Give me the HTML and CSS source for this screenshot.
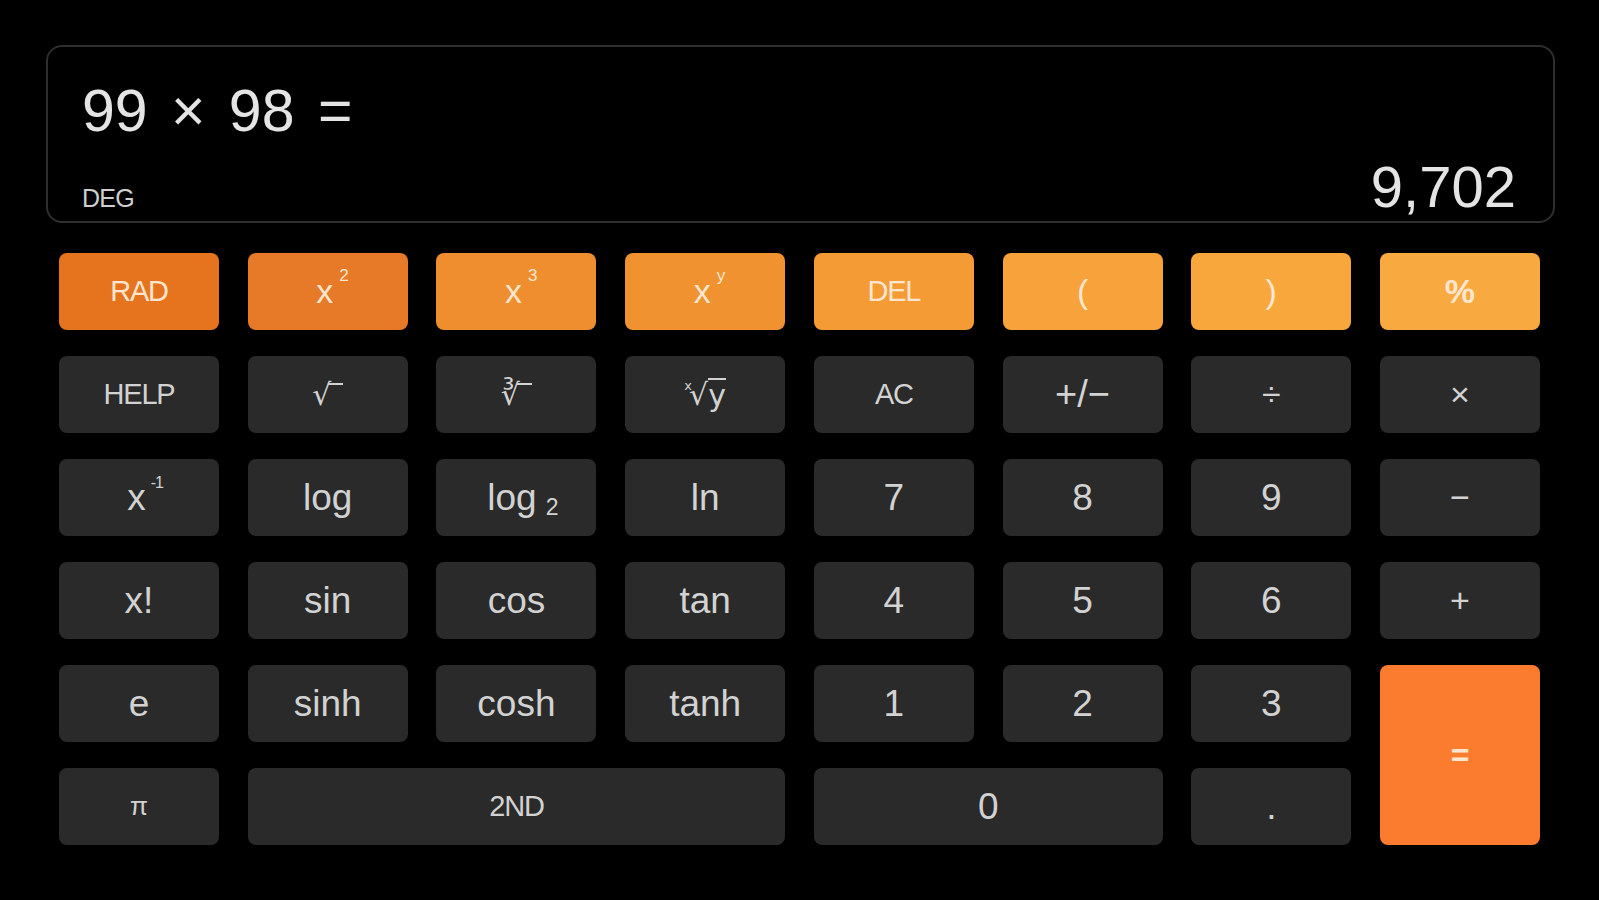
FILE: index.html
```html
<!DOCTYPE html>
<html lang="en">

<head>
    <meta charset="UTF-8">
    <meta name="viewport" content="width=device-width, initial-scale=1.0">
    <title>Scientific Calculator</title>
    <link rel="stylesheet" href="styles.css">
</head>

<body>
    <div class="calc">
        <div class="screen">
            <p class="expr">99 × 98 =</p>
            <div class="bottom">
                <span class="mode">DEG</span>
                <span class="result">9,702</span>
            </div>
        </div>
        <div class="keys">
            <button class="key top c1 caps">RAD</button>
            <button class="key top c2"><span class="lbl">x<span class="sup">2</span></span></button>
            <button class="key top c3"><span class="lbl">x<span class="sup">3</span></span></button>
            <button class="key top c4"><span class="lbl">x<span class="sup">y</span></span></button>
            <button class="key top c5 caps">DEL</button>
            <button class="key top c6">(</button>
            <button class="key top c7">)</button>
            <button class="key top c8 pct">%</button>

            <button class="key caps">HELP</button>
            <button class="key root">√<span class="bar"></span></button>
            <button class="key root">∛<span class="bar"></span></button>
            <button class="key root"><span class="idx">x</span>√<span class="rad">y</span></button>
            <button class="key caps">AC</button>
            <button class="key op">+/−</button>
            <button class="key op small">÷</button>
            <button class="key op small">×</button>

            <button class="key fn"><span class="lbl">x<span class="sup">-1</span></span></button>
            <button class="key fn">log</button>
            <button class="key fn"><span class="lbl">log<span class="sub">2</span></span></button>
            <button class="key fn">ln</button>
            <button class="key fn">7</button>
            <button class="key fn">8</button>
            <button class="key fn">9</button>
            <button class="key op small">−</button>

            <button class="key fn">x!</button>
            <button class="key fn">sin</button>
            <button class="key fn">cos</button>
            <button class="key fn">tan</button>
            <button class="key fn">4</button>
            <button class="key fn">5</button>
            <button class="key fn">6</button>
            <button class="key op small">+</button>

            <button class="key fn">e</button>
            <button class="key fn">sinh</button>
            <button class="key fn">cosh</button>
            <button class="key fn">tanh</button>
            <button class="key fn">1</button>
            <button class="key fn">2</button>
            <button class="key fn">3</button>
            <button class="key equals">=</button>

            <button class="key tiny">π</button>
            <button class="key caps second">2ND</button>
            <button class="key fn zero">0</button>
            <button class="key fn">.</button>
        </div>
    </div>
</body>

</html>
```

FILE: styles.css
```css
* {
    margin: 0;
    padding: 0;
    box-sizing: border-box;
}

body {
    background: #000;
    font-family: "Liberation Sans", Arial, sans-serif;
    color: #e4e4e4;
}

.calc {
    width: 1599px;
    height: 900px;
    padding: 45px 44px 0 46px;
}

.screen {
    height: 178px;
    border: 2px solid #2e2e2e;
    border-radius: 16px;
    padding: 35px 37px 5px 34px;
    display: flex;
    flex-direction: column;
}

.expr {
    font-size: 59px;
    line-height: 1;
    word-spacing: 7px;
}

.bottom {
    margin-top: auto;
    display: flex;
    justify-content: space-between;
    align-items: baseline;
}

.mode {
    font-size: 25px;
    letter-spacing: -0.8px;
    color: #cfcfcf;
}

.result {
    font-size: 58px;
    line-height: 1;
}

.keys {
    margin: 30px 15px 0 13px;
    display: grid;
    grid-template-columns: repeat(8, 1fr);
    grid-template-rows: repeat(6, 77px);
    gap: 26px 28.7px;
}

.key {
    border: none;
    border-radius: 8px;
    background: #2a2a2a;
    color: #d2d2d2;
    font-family: "Liberation Sans", Arial, sans-serif;
    font-size: 37px;
    display: flex;
    justify-content: center;
    align-items: center;
}

.caps {
    font-size: 29px;
    letter-spacing: -1.2px;
}

.top {
    color: #fde6cf;
    font-size: 34px;
}

.top.caps {
    font-size: 29px;
}

.c1 { background: #e6741f; }
.c2 { background: #e67a29; }
.c3 { background: #ef8e2e; }
.c4 { background: #f09230; }
.c5 { background: #f59b35; }
.c6 { background: #f7a23a; }
.c7 { background: #f8a73d; }
.c8 { background: #f8aa40; }

.pct {
    font-weight: bold;
    font-size: 34px;
}

.lbl {
    white-space: nowrap;
}

.sup {
    display: inline-block;
    width: 0;
    font-size: 17px;
    line-height: 0;
    vertical-align: 22px;
    margin-left: 6px;
}

.fn .sup {
    font-size: 16px;
    margin-left: 5px;
    letter-spacing: -1px;
}

.sub {
    display: inline-block;
    width: 0;
    font-size: 23px;
    line-height: 0;
    vertical-align: -5px;
    margin-left: 9px;
}

.root {
    font-size: 30px;
    font-family: "DejaVu Sans", sans-serif;
}

.bar {
    display: inline-block;
    width: 15px;
    border-top: 2px solid #d2d2d2;
    align-self: center;
    margin-bottom: 22px;
    margin-left: -3px;
}

.idx {
    font-size: 13px;
    align-self: center;
    margin-bottom: 18px;
    margin-right: -3px;
}

.rad {
    border-top: 2px solid #d2d2d2;
    line-height: 1;
    font-size: 30px;
    padding-top: 1px;
}

.op {
    font-size: 38px;
}

.small {
    font-size: 34px;
}

.tiny {
    font-size: 26px;
}

.equals {
    grid-column: 8;
    grid-row: 5 / span 2;
    background: #fb7b2f;
    color: #fde6cf;
    font-size: 32px;
    font-weight: bold;
}

.second {
    grid-column: 2 / span 3;
}

.zero {
    grid-column: 5 / span 2;
}
```
